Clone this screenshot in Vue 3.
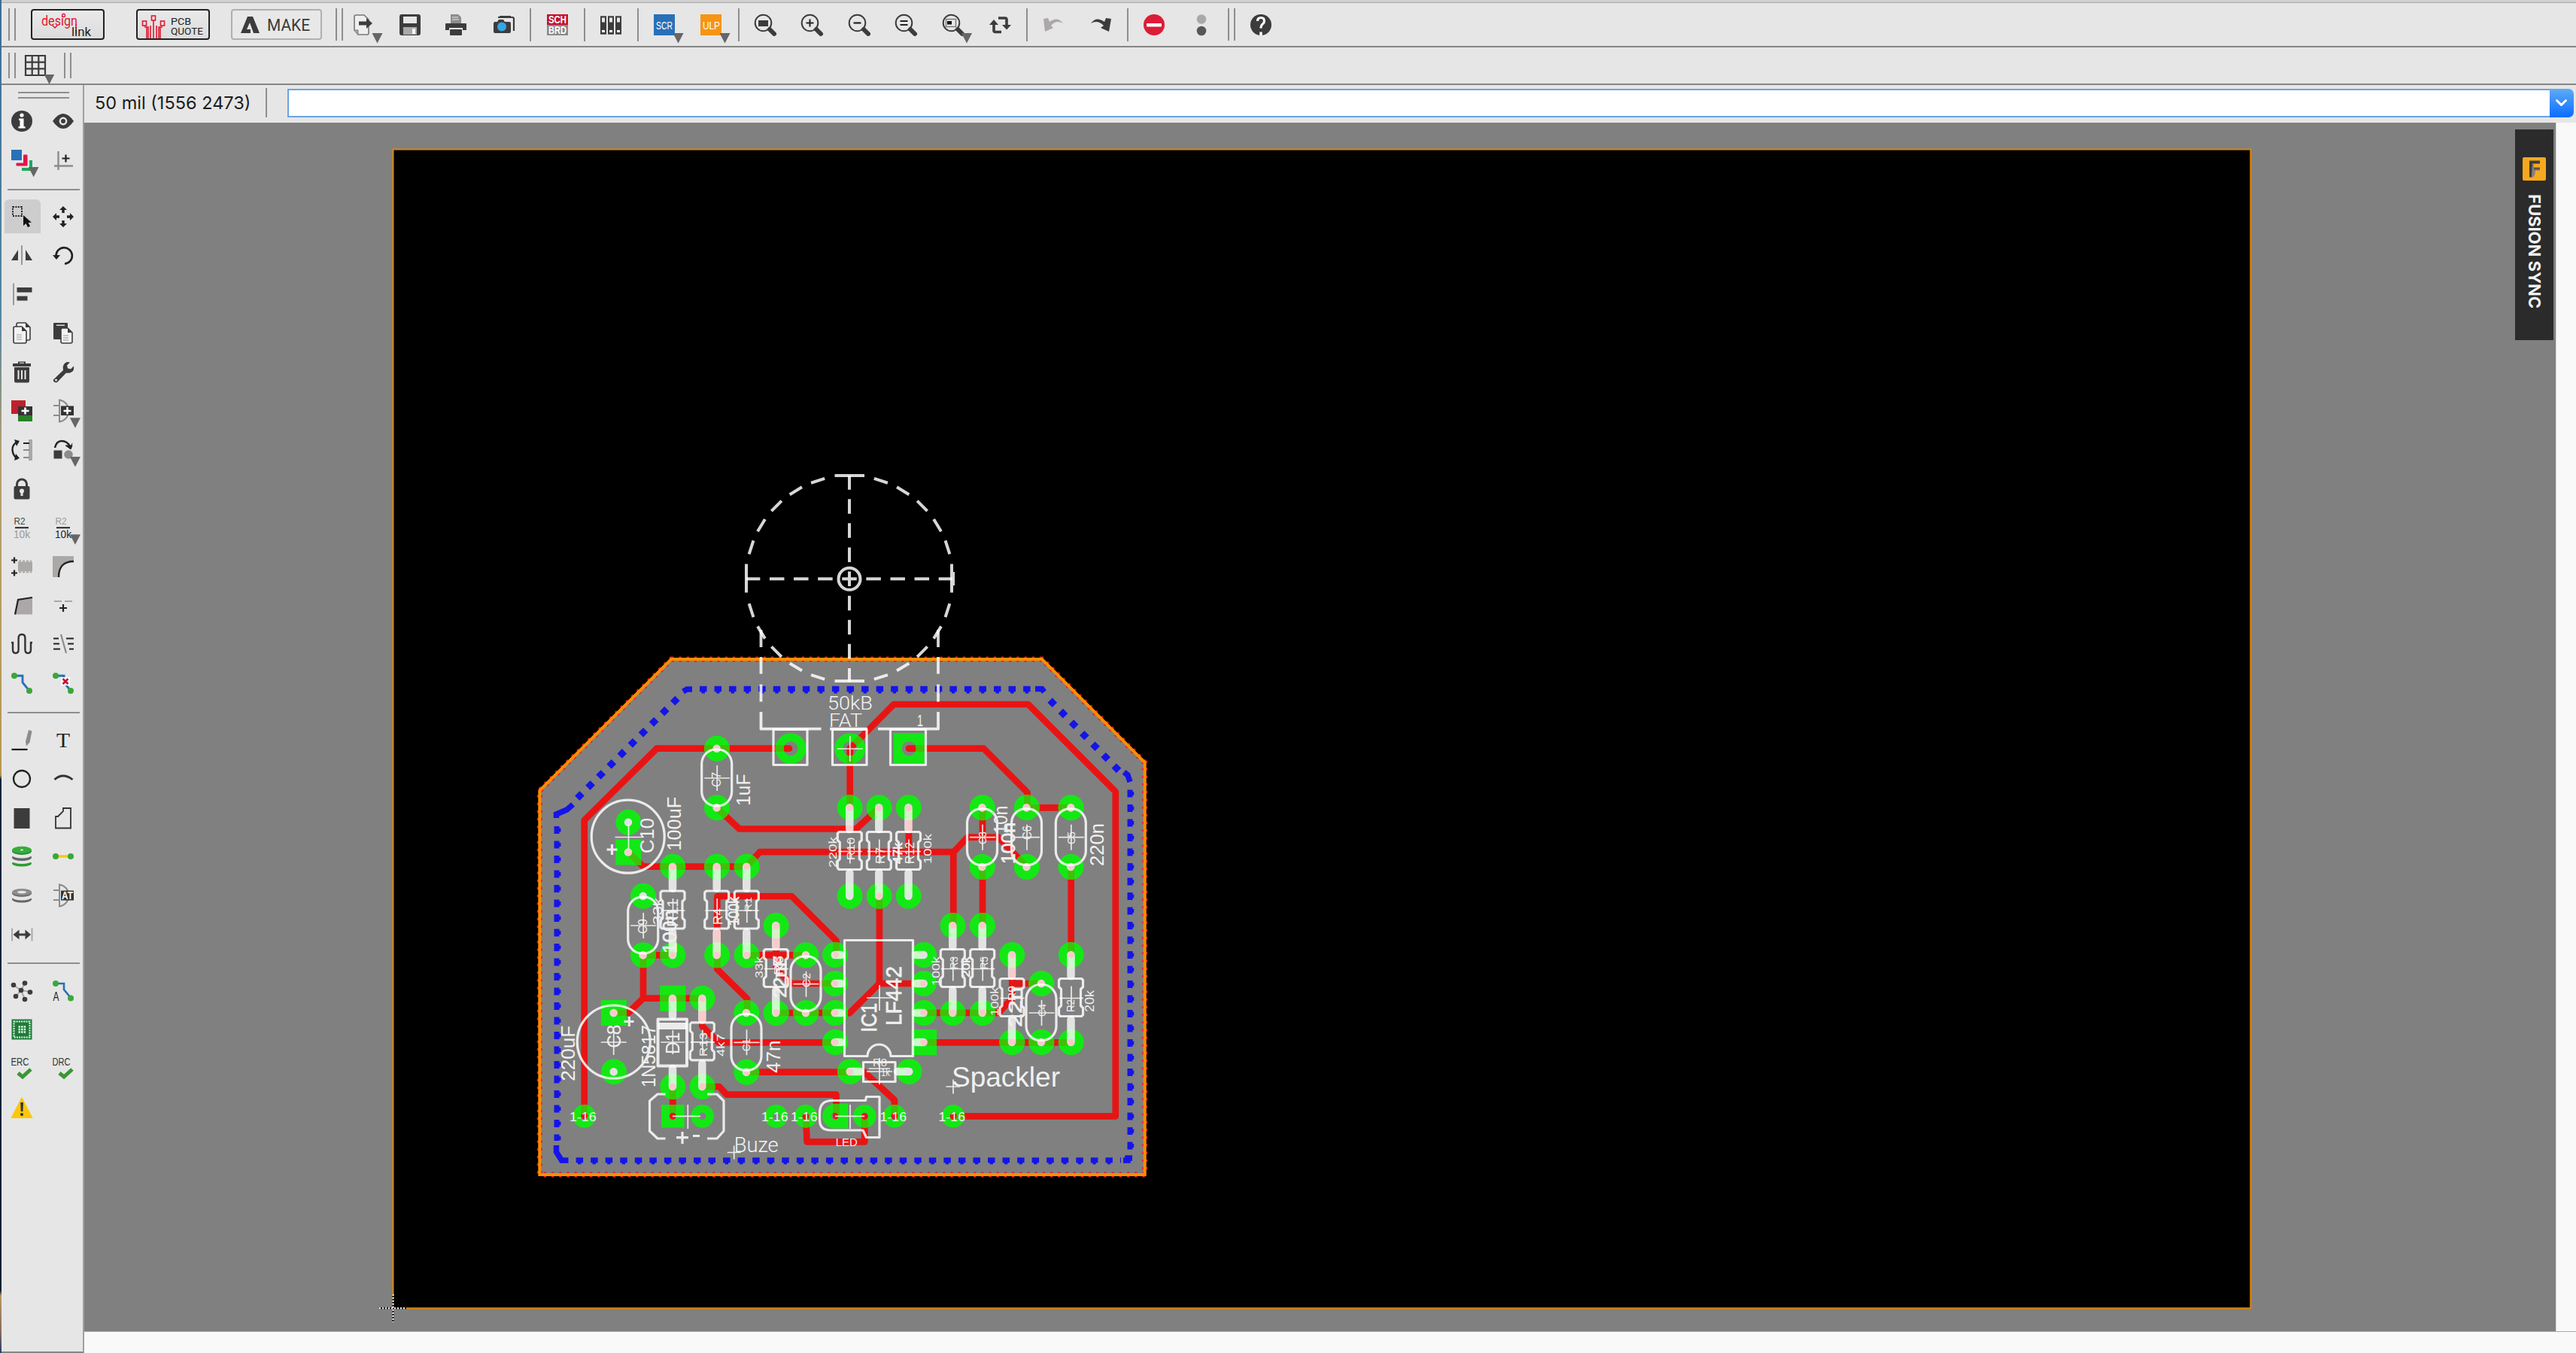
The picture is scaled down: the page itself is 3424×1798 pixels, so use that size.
<script setup>
const D = '#3c3c3c'
const lens = (inner) =>
  `<circle cx="13.5" cy="13.5" r="10.8" fill="none" stroke="${D}" stroke-width="2"/><path d="M22 22l6 6" stroke="${D}" stroke-width="6" stroke-linecap="round"/>${inner}`
const gate = `<path d="M3 9h8M3 22h8" stroke="#8c8c8c" stroke-width="2"/><path d="M11 1.5V30.500Q23 28 23 16T11 1.500z" fill="none" stroke="#8c8c8c" stroke-width="2"/>`
const cad = 'font-family="Liberation Sans, Arial, sans-serif"'
const label = (x, y, s, len, t, fill, extra = '') =>
  `<text x="${x}" y="${y}" font-size="${s}" textLength="${len}" lengthAdjust="spacingAndGlyphs" fill="${fill}" ${cad} ${extra}>${t}</text>`
const tick = `<path d="M11 22l6 5 11-10" fill="none" stroke="#3a9634" stroke-width="5"/>`
const doc = (x, y, w, h) =>
  `<path d="M${x + 2} ${y}h${w - 8}l6 6v${h - 8}q0 2-2 2h-${w - 4}q-2 0-2-2v-${h - 4}q0-2 2-2z" fill="#f2f2f2" stroke="${D}" stroke-width="1.6"/><path d="M${x + w - 6} ${y}v6h6z" fill="${D}"/>`

const icons = {
  exportf: `<path d="M6 3h11l6 6v18q0 2-2 2H9l-5-6V5q0-2 2-2z" fill="#efefef" stroke="#777" stroke-width="1.6"/><path d="M4 23h5v6" fill="#aaa" stroke="#777"/><path d="M10 11.500h10V7l8 7-8 7v-4.500H10z" fill="${D}"/>`,
  save: `<path d="M5 2h22q3 0 3 3v22q0 3-3 3H5q-3 0-3-3V5q0-3 3-3z" fill="${D}"/><rect x="7" y="5" width="18" height="9" fill="#e6e6e6"/><rect x="7" y="19" width="18" height="10" fill="#aca8a8"/><rect x="19" y="21" width="4" height="7" fill="#f5f5f5"/>`,
  print: `<path d="M9 2h10l4 4v9H9z" fill="#8c8c8c"/><path d="M11 6h8M11 9h9" stroke="#e6e6e6" stroke-width="1.200"/><path d="M3 14h26q1 0 1 1v8h-5v-3H7v3H2v-8q0-1 1-1z" fill="${D}"/><rect x="8" y="22" width="16" height="8" rx="1" fill="${D}"/>`,
  camera: `<path d="M8 6h19q2 0 2 2v16M12 10" fill="none" stroke="${D}" stroke-width="2.200"/><path d="M10 6.500l1-1.500h14" stroke="${D}" stroke-width="2" fill="none"/><path d="M4 12h3l2-3h6l2 3h6q2 0 2 2v11q0 2-2 2H4q-2 0-2-2V14q0-2 2-2z" fill="${D}"/><circle cx="13" cy="18.500" r="6" fill="#35a6e6"/>`,
  sch: `<rect x="2" y="2" width="28" height="14" fill="#c4122c"/><rect x="2" y="16" width="28" height="14" fill="#8a8a8a"/>${label(4, 14, 15, 24, 'SCH', '#fff', 'font-weight="bold"')}${label(4, 28, 15, 24, 'BRD', '#fff', 'font-weight="bold"')}`,
  lib: [2, 12, 22].map((x) => `<rect x="${x + 0.7}" y="5" width="6.600" height="23" fill="${D}" stroke="${D}" stroke-width="1.400"/><rect x="${x + 2}" y="6.500" width="4" height="6" fill="#e6e6e6"/><rect x="${x + 2}" y="23" width="4" height="3" fill="#fff"/>`).join(''),
  scr: `<rect x="2" y="2" width="28" height="28" fill="#2870b8"/>${label(5, 21.5, 15, 22, 'SCR', '#fff')}`,
  ulp: `<rect x="2" y="2" width="28" height="28" fill="#f59514"/>${label(5, 21.5, 15, 23, 'ULP', '#fff')}`,
  zfit: lens(`<rect x="7" y="10" width="13" height="8" fill="${D}"/>`),
  zin: lens(`<path d="M13.500 8.500v10M8.500 13.500h10" stroke="#222" stroke-width="2"/>`),
  zout: lens(`<path d="M8.500 13.500h10" stroke="#222" stroke-width="2.200"/>`),
  zeq: lens(`<path d="M8.500 11h10M8.500 16h10" stroke="#222" stroke-width="2"/>`),
  zsel: lens(`<rect x="6.500" y="8.500" width="13" height="10" fill="none" stroke="#777" stroke-width="1.400"/><rect x="8" y="11" width="6" height="4.500" fill="#111"/>`),
  refresh: `<path d="M14 7h9q2 0 2 2v9M18 25.500H10q-2 0-2-2V14" fill="none" stroke="${D}" stroke-width="3.600"/><path d="M19 16h12l-6 6.500zM2 16l6-7 6 7z" fill="${D}"/>`,
  undo: `<path d="M29 14Q22 4 11 12l-2-5-6 1 2 17 11-5-3-3Q20 9 29 14z" fill="#aca8a8"/>`,
  redo: `<path d="M3 14Q10 4 21 12l2-5 7 1-3 17-11-5 4-3Q12 9 3 14z" fill="${D}"/>`,
  stop: `<circle cx="16" cy="16" r="14" fill="#dc1c38"/><rect x="6" y="14" width="20" height="4.600" rx="1" fill="#fff"/>`,
  traffic: `<circle cx="16" cy="8.500" r="6.300" fill="#aca8a8"/><circle cx="16" cy="24" r="6.300" fill="#575757"/>`,
  help: `<circle cx="16" cy="16" r="14" fill="${D}"/><path d="M11.500 11q0-4.500 4.500-4.500t4.500 4.500q0 2.500-2.500 4.300-2 1.600-2 4.200v1" fill="none" stroke="#fff" stroke-width="3.200"/><rect x="14.300" y="25.500" width="3.400" height="4.500" fill="#fff"/>`,
  grid: `<path d="M3 3h26v26H3zM11.700 3v26M20.300 3v26M3 11.700h26M3 20.300h26" fill="none" stroke="${D}" stroke-width="2.200"/>`,
  info: `<circle cx="16" cy="16" r="14" fill="${D}"/><circle cx="16" cy="8" r="2.600" fill="#fff"/><path d="M12 12.500h6.500v10.500h2v2.500h-9V23h2v-8h-1.500z" fill="#fff"/>`,
  eye: `<path d="M2 16Q9 6 16 6t14 10Q23 26 16 26T2 16z" fill="${D}"/><circle cx="16" cy="16" r="4.200" fill="none" stroke="#e6e6e6" stroke-width="2.400"/>`,
  layers: `<rect x="2" y="2" width="14" height="14" fill="#2870b8"/><path d="M18.500 9v11H9v3h14V9z" fill="#e6144c" stroke="#e6144c"/><path d="M28 16v12H16" fill="none" stroke="#22a85a" stroke-width="4"/>`,
  mark: `<path d="M9.500 4v25M4 23.500h25" stroke="#8c8c8c" stroke-width="2.400"/><path d="M19.500 8.500v10M14.500 13.500h10" stroke="#222" stroke-width="2.200"/>`,
  group: `<rect x="4" y="3" width="12" height="12" fill="none" stroke="#222" stroke-width="2" stroke-dasharray="2 1.400"/><path d="M18 14v14l3.500-3 2.500 5 3-1.400-2.500-4.800h4.500z" fill="#111"/>`,
  move: `<path d="M16 2l5 5h-3.300v4h-3.400V7H11zM16 30l5-5h-3.300v-4h-3.400v4H11zM2 16l5-5v3.300h4v3.400H7V21zM30 16l-5-5v3.300h-4v3.400h4V21z" fill="#222"/>`,
  mirror: `<path d="M16 3v26" stroke="#9a9a9a" stroke-width="2"/><path d="M11 9v14H2zM21 9v14h9z" fill="${D}"/>`,
  rotate: `<path d="M6.500 17a10.700 10.700 0 1 1 11.500 10.500" fill="none" stroke="#222" stroke-width="2.600"/><path d="M2 16h10l-5 6z" fill="#222"/>`,
  align: `<path d="M5 1.500v29" stroke="#9a9a9a" stroke-width="2"/><rect x="9.500" y="7" width="20" height="6.500" fill="${D}"/><rect x="9.500" y="18.500" width="14" height="6" fill="${D}"/>`,
  copy: doc(9, 2, 18, 23) + doc(5, 7, 17, 22) + `<path d="M9 18h7M9 21h7M9 24h7" stroke="#999" stroke-width="1.100"/>`,
  paste: `<rect x="3" y="2" width="19" height="22" rx="1" fill="${D}"/><rect x="7" y="4.500" width="11" height="1.500" fill="#ddd"/>${doc(13, 9, 15, 20)}<path d="M16 19h7M16 22h7M16 25h7" stroke="#999" stroke-width="1"/>`,
  trash: `<path d="M4 4h7V1.500h10V4h7v4H4zM6 9h20v18q0 2.500-2 2.500H8q-2 0-2-2.500z" fill="${D}"/><path d="M11.500 13v12M16 13v12M20.500 13v12" stroke="#e6e6e6" stroke-width="2"/><path d="M13 3.300h6" stroke="#e6e6e6"/>`,
  wrench: `<path d="M3.500 25L16 13q-2-8 5-11l4 .5-4 4 1 4 4 1 4-4q1 6-3 8-3 2-7 1L8 29q-3 1-4.500-1t0-3z" fill="${D}"/><circle cx="6.500" cy="26" r="1.500" fill="#e6e6e6"/>`,
  addpart: `<rect x="2" y="2" width="19" height="18" fill="#c0202c"/><rect x="11" y="20" width="19" height="10" fill="#2a8028"/><rect x="11" y="10" width="19" height="12" fill="#333"/><path d="M20.500 11.500v9M15.500 16h10" stroke="#fff" stroke-width="2.600"/>`,
  addgate: gate + `<rect x="13" y="9.500" width="17" height="12.500" fill="#333"/><path d="M21.500 11v9.500M16.500 16h10" stroke="#fff" stroke-width="2.400"/>`,
  pinswap: `<path d="M10 5Q3 9 3.500 16T10 28" fill="none" stroke="#222" stroke-width="2.400"/><path d="M6 2l7 2-4 7zM6 30l7-3-5-6z" fill="#222"/><rect x="25" y="2" width="5" height="28" fill="#aca8a8"/><path d="M18 7h8" stroke="#222" stroke-width="2"/><path d="M18 16h8M18 26h8" stroke="#8c8c8c" stroke-width="2"/>`,
  replace: `<path d="M5 13Q7 4 14 4t11 7" fill="none" stroke="#222" stroke-width="2.600"/><path d="M19 10h9l-2 5zM28 7l-2 7" fill="#222" stroke="#222"/><rect x="3.500" y="16.500" width="11" height="11" fill="${D}"/><circle cx="23" cy="22" r="5.800" fill="#8c8c8c"/>`,
  lock: `<path d="M9.500 14V9.500a6.500 6.500 0 0 1 13 0V14" fill="none" stroke="${D}" stroke-width="3"/><rect x="5.500" y="12" width="21" height="17.500" rx="2" fill="${D}"/><circle cx="16" cy="18.500" r="3" fill="#e6e6e6"/><path d="M16 18v7" stroke="#e6e6e6" stroke-width="3"/>`,
  name: label(5.500, 12, 13, 15, 'R2', '#444') + `<path d="M7 16.300h18" stroke="#111" stroke-width="1.800"/>` + label(5, 30, 14, 22, '10k', '#9a9a9a'),
  value: label(5.500, 12, 13, 15, 'R2', '#9a9a9a') + `<path d="M7 16.300h18" stroke="#111" stroke-width="1.800"/>` + label(5, 30, 14, 22, '10k', '#222'),
  smash: `<rect x="11" y="9.500" width="19" height="13" fill="#aca8a8"/><path d="M12 8.500h17M12 23.500h17" stroke="#aca8a8" stroke-width="2" stroke-dasharray="3 2"/><path d="M6 3.500v8M2 7.500h8M6 20.500v8M2 24.500h8" stroke="#222" stroke-width="2.200"/>`,
  miter: `<rect x="2" y="2" width="28" height="28" fill="#aca8a8"/><path d="M10 30Q10 9 30 9v21z" fill="#e6e6e6"/><path d="M10 30Q10 9 30 9" fill="none" stroke="#222" stroke-width="2.400"/>`,
  split: `<path d="M7 27.500L11 8l19-3v22.500z" fill="#aca8a8"/><path d="M7 27.500L11 8l19-3" fill="none" stroke="#222" stroke-width="2.200"/>`,
  optimize: `<path d="M4 10h10M18 10h10" stroke="#aca8a8" stroke-width="2.200"/><path d="M16 14v10M11 19h10" stroke="#222" stroke-width="2.200"/>`,
  meander: `<path d="M2 14h2v9q0 5 3.800 5t3.800-5V8q0-5 4.400-5t4.400 5v15q0 5 3.800 5t3.800-5v-9h2" fill="none" stroke="#333" stroke-width="2.400"/>`,
  ripup: `<path d="M13 3l7 25" stroke="#8c8c8c" stroke-width="2.200"/><path d="M3 8.500h7M3 15.500h8M3 22.500h9M20 8.500h10M22 15.500h8M24 22.500h6" stroke="#222" stroke-width="2"/>`,
  route: `<path d="M6 6h11v9l9 11" fill="none" stroke="#2870b8" stroke-width="2.800"/><circle cx="6" cy="6" r="4" fill="#3aa838"/><circle cx="26" cy="26" r="4" fill="#3aa838"/>`,
  unroute: `<path d="M6 6h11v9l9 11" fill="none" stroke="#2870b8" stroke-width="2.800"/><rect x="13" y="8" width="12" height="11" fill="#fff"/><path d="M15.500 10l7 7M22.500 10l-7 7" stroke="#c8102c" stroke-width="2.600"/><circle cx="6" cy="6" r="4" fill="#3aa838"/><circle cx="26" cy="26" r="4" fill="#3aa838"/>`,
  line: `<path d="M2.500 29h21" stroke="#111" stroke-width="2.200"/><path d="M25 3l4.500 1.500-3 15-4.500 5-1-6z" fill="#8c8c8c"/>`,
  text: `<text x="7" y="26" font-size="27" textLength="18" lengthAdjust="spacingAndGlyphs" fill="#222" font-family="Liberation Serif, serif">T</text>`,
  circle: `<circle cx="16" cy="16" r="11" fill="none" stroke="#222" stroke-width="2.300"/>`,
  arc: `<path d="M4.500 17q11-10 24 0" fill="none" stroke="#333" stroke-width="2.800"/>`,
  rect: `<rect x="5.500" y="3" width="21" height="27" fill="${D}"/>`,
  poly: `<path d="M6 29.500V14h3l7-7V3h10v26.500z" fill="none" stroke="#333" stroke-width="1.800"/>`,
  via: `<ellipse cx="16" cy="25.500" rx="13" ry="4" fill="#2f9c34"/><ellipse cx="16" cy="22" rx="13" ry="4" fill="#e6e6e6"/><ellipse cx="16" cy="17.500" rx="13" ry="4.500" fill="#666"/><ellipse cx="16" cy="14" rx="13" ry="4.500" fill="#e6e6e6"/><ellipse cx="16" cy="9" rx="13" ry="5" fill="#1e8c36"/><ellipse cx="16" cy="7.500" rx="13" ry="4.700" fill="#38ac3a"/><ellipse cx="16" cy="7.500" rx="2" ry=".9" fill="#e6e6e6"/>`,
  signal: `<path d="M6 16h20" stroke="#ffc814" stroke-width="3.600"/><circle cx="6" cy="16" r="4" fill="#3aa838"/><circle cx="26" cy="16" r="4" fill="#3aa838"/>`,
  hole: `<ellipse cx="16" cy="21" rx="13" ry="4.500" fill="#666"/><ellipse cx="16" cy="18" rx="13" ry="4.500" fill="#e6e6e6"/><ellipse cx="16" cy="13" rx="13" ry="4.800" fill="#666"/><ellipse cx="16" cy="11.500" rx="13" ry="4.500" fill="#8c8c8c"/><ellipse cx="16" cy="11.500" rx="6" ry="1.800" fill="#e6e6e6"/>`,
  attr: gate + `<rect x="13" y="9.500" width="17" height="13" fill="#333"/>${label(14, 21, 14, 15, 'AT', '#fff', 'font-weight="bold"')}`,
  dim: `<path d="M3 7.500v17M29.500 7.500v17" stroke="#aca8a8" stroke-width="2"/><path d="M4.500 16l8-6.500v5h8v-5l7.500 6.500-7.500 6.500v-5h-8v5z" fill="${D}"/>`,
  ratsnest: `<path d="M15 15L5 8M15 15l5-9M15 15l12 2M15 15l5 12M15 15l-7 8" stroke="#aca8a8" stroke-width="2"/>` + [[15, 15], [5, 8], [20, 5.500], [27, 17.500], [20, 27], [8, 23]].map(([x, y]) => `<circle cx="${x}" cy="${y}" r="3.300" fill="${D}"/>`).join(''),
  autoroute: `<path d="M6 6h11v8l9 11" fill="none" stroke="#2870b8" stroke-width="2.600"/><circle cx="6" cy="6" r="4" fill="#3aa838"/><circle cx="26" cy="25.500" r="4" fill="#3aa838"/>${label(2.500, 29, 17, 8, 'A', '#222')}`,
  cam: `<rect x="2.500" y="2.500" width="27" height="27" fill="#1e7c3a"/><rect x="5.500" y="5.500" width="21" height="21" fill="none" stroke="#e8f4e8" stroke-width="2" stroke-dasharray="2 1.200"/><path d="M11.500 12.500h10M11.500 16h10M11.500 19.500h10" stroke="#e8f4e8" stroke-width="2.400" stroke-dasharray="2.400 1.200"/>`,
  erc: label(1.500, 12, 15, 24, 'ERC', '#333') + tick,
  drc: label(1.500, 12, 15, 24, 'DRC', '#333') + tick,
  warn: `<path d="M16 2.500L30 29.500H2z" fill="#fcc80c" stroke="#fcc80c" stroke-linejoin="round"/><path d="M14.200 9h3.800l-.6 12h-2.600z" fill="#333"/><circle cx="16" cy="25" r="2.100" fill="#333"/>`,
}

const topTools = [
  ['exportf', 60, 1], ['save', 63], ['print', 60], ['camera', 67], ['|', 4], ['sch', 68], ['|', 4], ['lib', 65],
  ['|', 8], ['scr', 62, 1], ['ulp', 62, 1], ['|', 12], ['zfit', 58], ['zin', 66], ['zout', 59], ['zeq', 66],
  ['zsel', 59, 1], ['refresh', 66], ['|', 6], ['undo', 64], ['redo', 62], ['|', 10], ['stop', 59],
  ['traffic', 67], ['||', 14], ['help', 64],
].map(([name, width, menu]) => ({ name, width, menu }))

const sideRows = [
  ['info', 'eye'], ['layers+', 'mark'], [],
  ['group', 'move'], ['mirror', 'rotate'], ['align', ''], ['copy', 'paste'], ['trash', 'wrench'],
  ['addpart', 'addgate+'], ['pinswap', 'replace+'], ['lock', ''], ['name', 'value+'], ['smash', 'miter'],
  ['split', 'optimize'], ['meander', 'ripup'], ['route', 'unroute'], [],
  ['line', 'text'], ['circle', 'arc'], ['rect', 'poly'], ['via', 'signal'], ['hole', 'attr'], ['dim', ''], [],
  ['ratsnest', 'autoroute'], ['cam', ''], ['erc', 'drc'], ['warn', ''],
].map((r) => r.map((k) => ({ name: k.replace('+', ''), menu: k.endsWith('+') })))

/* board */
const edge = 'M892.3 876H1385L1521.7 1013.300V1561H717.300V1050.700z'

const traces = [
  'M1049 994.700H873L776.700 1090V1483',
  'M1129.700 994.700L1188 936H1366.700L1482.800 1052V1483.300H1267',
  'M1208 994.700H1307.500L1365.500 1053V1073.300H1423.600',
  'M1129.700 994.700V1073.300',
  'M952.700 1073.300L982.700 1101.500H1138L1168.700 1073.300',
  'M835 1132.500L855 1151.700H992.300L1010 1132.200H1267.500L1286 1112.700H1327L1365 1152',
  'M1267.300 1132V1230', 'M1306 1073.300V1112', 'M1306 1152V1230', 'M1208 1073.300V1132', 'M1423.700 1152V1269',
  'M993 1346V1327L953.300 1288V1191H1052.300L1111.500 1250V1269',
  'M1168.900 1190.700V1307H1227', 'M1168.900 1307L1129 1346.500', 'M1031.700 1346H1110',
  'M855 1269.300H894', 'M855 1269.300V1326.700L835 1346H815.700', 'M855 1326.700H933.300',
  'M933.300 1326.700V1363.500L955 1385.300H1110', 'M992.300 1424.700H1129.700', 'M1148 1424L1189 1462V1483.300',
  'M933.300 1444H956L966 1454.700H1111.500V1483', 'M894.300 1444V1483.300',
  'M1071 1483.300L1072.700 1517.300H1149.300V1483.300',
  'M992.300 1269.300H1071', 'M1031.700 1230V1288L1052 1307H1109.700',
  'M1227 1346H1327L1345.300 1327V1269', 'M1345.300 1307H1384.700', 'M1227 1385.300H1423.700',
]

const resistors = [
  [894, 1151.700, 1269.300], [952.700, 1151.700, 1269.300], [992.300, 1151.700, 1269.300],
  [1129.300, 1073.300, 1190.700], [1168.300, 1073.300, 1190.700], [1207.500, 1073.300, 1190.700],
  [1031.300, 1230, 1346], [1266.300, 1230, 1346], [1305.700, 1230, 1346],
  [1345, 1269, 1385], [1423.500, 1269, 1385], [933.300, 1326.700, 1444],
]
const caps = [
  [952.700, 994.700, 1073.300], [854.700, 1190.700, 1269.300], [1071, 1269.300, 1346], [992, 1346, 1424.700],
  [1305.500, 1073.300, 1152], [1364.500, 1073.300, 1152], [1423.300, 1073.300, 1152], [1384, 1307, 1385],
]
const rounds = [
  ...resistors.flatMap(([x, a, b]) => [[x, a], [x, b]]),
  ...caps.flatMap(([x, a, b]) => [[x, a], [x, b]]),
  [835, 1092.700], [815.700, 1424.300], [894, 1444], [1109.700, 1269], [1109.700, 1307], [1109.700, 1346],
  [1109.700, 1385], [1227.700, 1269], [1227.700, 1307], [1227.700, 1346], [1129.700, 1424], [1208.300, 1424],
].map(([x, y]) => [x + 0.3, y, 17, 5])
const smalls = [[776.700, 1483.300], [1031.700, 1483.300], [1071, 1483.300], [1189, 1483.300], [1267, 1483.300], [933.700, 1483.300], [1149.300, 1483.300]]
  .map(([x, y]) => [x, y, 15.300, 4.800])
const rings = [...rounds, ...smalls, [1051, 994.700, 20.500, 9.500], [1129.800, 994.700, 20.500, 9.500]]
const squares = [[835.300, 1132.500, 17, 5], [815.800, 1346, 17, 5], [894.300, 1326.700, 17, 5], [1228, 1385, 17, 5],
  [894.300, 1483.300, 15.300, 4.800], [1208.300, 994.700, 20.500, 9.500]]

const sq = ([x, y, h, r]) =>
  `M${x - h} ${y - h}h${2 * h}v${2 * h}h${-2 * h}zM${x - r} ${y}a${r} ${r} 0 1 0 ${2 * r} 0a${r} ${r} 0 1 0 ${-2 * r} 0z`
const ring = ([x, y, R, r]) =>
  `M${x - R} ${y}a${R} ${R} 0 1 0 ${2 * R} 0a${R} ${R} 0 1 0 ${-2 * R} 0zM${x - r} ${y}a${r} ${r} 0 1 0 ${2 * r} 0a${r} ${r} 0 1 0 ${-2 * r} 0z`
const ledPad = `M1109.500 1467H1127.300V1499.500H1109.500a16.200 16.200 0 0 1 0 -32.500zM1105 1483.300a4.800 4.800 0 1 0 9.600 0a4.800 4.800 0 1 0 -9.600 0z`
const padPaths = [...rings.map(ring), ...squares.map(sq), ledPad]

const body = ([x, a, b]) => {
  const c = (a + b) / 2 - 1.5
  return `M${x - 14} ${c - 25}h28l2 2v9l-3 3v22l3 3v9l-2 2h-28l-2-2v-9l3-3v-22l-3-3v-9z`
}
const cross = (x, y, h = 16) => `M${x - h} ${y}h${2 * h}M${x} ${y - h}v${2 * h}`
const crosses = [
  ...resistors.map(([x, a, b]) => cross(x + 0.5, (a + b) / 2 - 0.5)),
  ...caps.map(([x, a, b]) => cross(x + 0.5, (a + b) / 2, 17)),
  cross(815.700, 1385, 17), cross(894.300, 1385, 16), cross(1129.800, 995, 17), cross(1169, 1326, 17),
  cross(1169, 1424, 17), cross(1169, 1420, 14), cross(975.700, 1531.500, 9), cross(1267, 1444, 9.500),
  'M817.500 1112.500h37M835.500 1096v32', 'M894 1483.300h37M914.300 1468v32', 'M1110 1483.300h39M1130 1468v32',
].join('')

const rad = Math.PI / 180
const dial = []
for (let q = 0; q < 4; q++)
  for (const a of [17.800, 31.300, 45, 58.700, 72.200]) {
    const t = (q * 90 + a) * rad
    const x = 1129 + 137 * Math.sin(t)
    const y = 769.300 - 137 * Math.cos(t)
    const dx = 9.500 * Math.cos(t)
    const dy = 9.500 * Math.sin(t)
    dial.push(`M${x - dx} ${y - dy}L${x + dx} ${y + dy}`)
  }
const dialPath = dial.join('')

/* upright text reading bottom-to-top: baseline x, bottom y, length, cap height, text, weight */
const vLabels = [
  [997, 1070.700, 42, 19, '1uF', 1], [905, 1130.700, 72, 18, '100uF', 1], [869, 1134, 47, 19, 'C10', 1],
  [899, 1267, 58, 18, '100n', 2], [880, 1229, 36, 12, '33k', 1], [901, 1232, 38, 15, 'R11', 1],
  [960, 1229, 22, 12, 'R4', 1], [982, 1230, 38, 14, '100k', 2], [999, 1212, 20, 9, 'R1', 1],
  [860, 1241, 20, 12, 'C9', 1], [957.500, 1046, 20, 12, 'C7', 1], [1014, 1300, 29, 11, '33k', 1],
  [1045, 1326, 56, 17, '22nF', 2], [1041, 1296, 26, 12, 'R6', 1], [1077, 1312, 19, 11, 'C2', 1],
  [764, 1436.700, 74, 18, '220uF', 1], [825, 1392.700, 31, 19, 'C8', 1], [870.500, 1445, 83, 19, '1N5817', 1],
  [902.500, 1400.700, 29, 18, 'D1', 1], [940, 1404, 32, 11, 'R13', 1], [963, 1404, 30, 11, '4k7', 1],
  [997, 1397, 17, 11, 'C1', 1], [1036.500, 1425.700, 43, 19, '47n', 1],
  [1165, 1371.700, 39, 21, 'IC1', 2], [1198, 1363, 79, 21, 'LF442', 2],
  [1467, 1151, 57, 18, '220n', 1], [1339, 1108, 37, 18, '10n', 1], [1349, 1148, 55, 18, '100n', 2],
  [1112, 1153, 41, 11, '220k', 1], [1136, 1143, 30, 11, 'R10', 1], [1175.500, 1148, 22, 12, 'R7', 1],
  [1199, 1148, 28, 12, '47k', 2], [1215, 1148, 29, 12, 'R12', 1], [1237.500, 1148, 40, 11, '100k', 1],
  [1310.500, 1122, 17, 11, 'C3', 1], [1371, 1116, 19, 12, 'C6', 1], [1428.500, 1122, 17, 11, 'C5', 1],
  [1249, 1310, 39, 11, '100k', 1], [1273, 1288, 17, 11, 'R3', 1], [1289, 1299, 28, 11, '20k', 2],
  [1312.500, 1288, 17, 11, 'R5', 1], [1327, 1350, 38, 11, '100k', 1], [1358, 1365, 54, 17, '22n', 2],
  [1350, 1330, 20, 11, 'R9', 1], [1390, 1351, 17, 11, 'C4', 1], [1428, 1345, 17, 11, 'R2', 1],
  [1454, 1345, 29, 12, '20k', 1],
]
/* x, baseline y, length, cap height, text, weight */
const hLabels = [
  [1100, 943, 60, 18.500, '50kB', 0], [1102, 966, 44, 18.500, 'FAT', 0], [1219, 965, 8, 15.500, '1', 1],
  [975.700, 1531, 59, 19.500, 'Buze', 0], [1110.700, 1523, 29, 11, 'LED', 1], [1265, 1443.500, 144, 26, 'Spackler', 1],
  [1160, 1417, 19, 11, 'R8', 1], [1171, 1430, 12, 11, '1k', 1],
  ...[757, 1012, 1051, 1169.500, 1247.500].map((x) => [x, 1489.500, 35.500, 11.500, '1-16', 1]),
]
</script>

<template>
  <div class="app">
    <div class="desktop"></div>
    <div class="window">
      <div class="strip"></div>
      <header class="bar main">
        <i class="grip"></i>
        <button class="badge link">
          <svg width="94" height="38" viewBox="0 0 94 38">
            <text x="12" y="20" font-size="18" textLength="48" lengthAdjust="spacingAndGlyphs" fill="#e01830">design</text>
            <circle cx="41.500" cy="6.500" r="2" fill="none" stroke="#e01830" stroke-width="1.300" />
            <path d="M27 20l3 3 3-3M58 18v13" fill="none" stroke="#e01830" stroke-width="1.500" />
            <text x="52" y="34" font-size="17" textLength="26" lengthAdjust="spacingAndGlyphs" fill="#222">link</text>
          </svg>
        </button>
        <button class="badge quote">
          <svg width="94" height="38" viewBox="0 0 94 38">
            <path d="M12 38V22h-3M17 38V20M21 38V13M25 38V20M30 38V22h3M9 21v-1M9 22h5v16M33 22h-5v16" fill="none" stroke="#e01830" stroke-width="1.600" />
            <rect x="6.500" y="14" width="5" height="6" fill="none" stroke="#e01830" stroke-width="1.600" />
            <rect x="18.500" y="7" width="5" height="6" fill="none" stroke="#e01830" stroke-width="1.600" />
            <rect x="30.500" y="14" width="5" height="6" fill="none" stroke="#e01830" stroke-width="1.600" />
            <text x="44" y="19" font-size="12" textLength="27" lengthAdjust="spacingAndGlyphs" fill="#222">PCB</text>
            <text x="44" y="32" font-size="12" textLength="43" lengthAdjust="spacingAndGlyphs" fill="#222">QUOTE</text>
          </svg>
        </button>
        <button class="badge make">
          <svg width="117" height="38" viewBox="0 0 117 38">
            <path d="M11 30L20 8h7l9 22h-8l-5-14-4 9h5v5z" fill="#3c3c3c" />
            <text x="46" y="27" font-size="22" textLength="57" lengthAdjust="spacingAndGlyphs" fill="#3a3a3a">MAKE</text>
          </svg>
        </button>
        <i class="grip second"></i>
        <div class="tools">
          <div v-for="(t, i) in topTools" :key="i" class="tool" :style="{ width: t.width + 'px' }">
            <i v-if="t.name === '|'" class="sep"></i>
            <i v-else-if="t.name === '||'" class="grip"></i>
            <template v-else>
              <svg class="icon" viewBox="0 0 32 32" v-html="icons[t.name]"></svg>
              <i v-if="t.menu" class="more"></i>
            </template>
          </div>
        </div>
      </header>

      <div class="bar params">
        <i class="grip"></i>
        <div class="tool gridtool">
          <svg class="icon" viewBox="0 0 32 32" v-html="icons.grid"></svg>
          <i class="more"></i>
        </div>
        <i class="grip"></i>
      </div>

      <div class="work">
        <aside class="side">
          <div class="handle"></div>
          <template v-for="(row, i) in sideRows" :key="i">
            <div v-if="!row.length" class="rule"></div>
            <div v-else class="row">
              <div v-for="(c, j) in row" :key="j" class="cell" :class="{ on: c.name === 'group' }">
                <svg v-if="c.name" class="icon" viewBox="0 0 32 32" v-html="icons[c.name]"></svg>
                <i v-if="c.menu" class="more"></i>
              </div>
            </div>
          </template>
        </aside>

        <main class="editor">
          <div class="command">
            <span class="coords">50 mil (1556 2473)</span>
            <i class="csep"></i>
            <div class="field">
              <div class="input"></div>
              <div class="drop">
                <svg width="32" height="36" viewBox="0 0 32 36"><path d="M9.500 15.500l6 6 6-6" fill="none" stroke="#fff" stroke-width="3" stroke-linecap="round" stroke-linejoin="round" /></svg>
              </div>
            </div>
          </div>

          <div class="viewport">
            <div class="canvas">
              <svg class="board" width="3285" height="1606" viewBox="112 163 3285 1606">
                <defs>
                  <mask id="padmask" maskUnits="userSpaceOnUse" x="700" y="860" width="840" height="720">
                    <path v-for="(p, i) in padPaths" :key="i" :d="p" fill="#fff" fill-rule="evenodd" />
                  </mask>
                </defs>
                <rect x="522.500" y="198.500" width="2469" height="1540" fill="#000" stroke="#e08600" stroke-width="2" />
                <path d="M504 1738.500h36M522.500 1720v37" stroke="#000" stroke-width="2" />
                <path d="M504 1738.500h36M522.500 1720v37" stroke="#fff" stroke-width="2" stroke-dasharray="2 2" />

                <path :d="edge" fill="#808080" />
                <path :d="edge" fill="none" stroke="#f01818" stroke-width="7" stroke-dasharray="3.300 6.900" />
                <path :d="edge" fill="none" stroke="#ff8c00" stroke-width="4" />

                <g fill="none" stroke="#1414e8">
                  <path d="M930 915.500H1372" stroke-width="7.500" stroke-dasharray="9.500 10.050" />
                  <path d="M932.500 920.300H1372" stroke-width="2.500" stroke-dasharray="4.500 15.050" />
                  <path d="M765.600 1541.700H1490" stroke-width="7" stroke-dasharray="9.500 10.050" />
                  <path d="M768 1546H1490" stroke-width="2.500" stroke-dasharray="4.500 15.050" />
                  <path d="M740 1098V1516" stroke-width="7" stroke-dasharray="10 9.500" />
                  <path d="M744.200 1100.500V1516" stroke-width="2.500" stroke-dasharray="5 14.500" />
                  <path d="M1502 1049.500V1532" stroke-width="7" stroke-dasharray="10 9.500" />
                  <path d="M1506 1052V1532" stroke-width="2.500" stroke-dasharray="5 14.500" />
                  <path d="M900.500 928L764 1064" stroke-width="9" stroke-dasharray="9 10.900" />
                  <path d="M1395.600 930.500L1492 1029" stroke-width="9" stroke-dasharray="9 11.300" />
                  <path d="M908 919l5-3h7M739.500 1087v-5l14-6 8-7M739.500 1522v9l7 11h9M1376 915.500h9l3 4M1494 1026l5 4 3 9M1493 1542h6v-3h6" stroke-width="7.500" />
                </g>

                <g fill="none" stroke="#e81414" stroke-width="8.700" stroke-linejoin="round">
                  <path v-for="(t, i) in traces" :key="i" :d="t" stroke-linecap="round" />
                </g>
                <path v-for="(p, i) in padPaths" :key="'p' + i" :d="p" fill="#14e814" fill-rule="evenodd" />
                <g fill="none" stroke="#40c008" stroke-width="8.700" stroke-linejoin="round" mask="url(#padmask)">
                  <path v-for="(t, i) in traces" :key="i" :d="t" stroke-linecap="round" />
                </g>

                <g class="leads">
                  <template v-for="(r, i) in resistors" :key="i">
                    <path :d="`M${r[0]} ${r[1]}V${(r[1] + r[2]) / 2 - 30}`" />
                    <path :d="`M${r[0]} ${r[2]}V${(r[1] + r[2]) / 2 + 28}`" />
                  </template>
                  <path d="M894 1326.700V1350M894 1444V1420" />
                  <path v-for="y in [1269, 1307, 1346, 1385]" :key="y" :d="`M1109.700 ${y}H1118M1227.700 ${y}H1218`" />
                  <path d="M1129.700 1424H1143M1208.300 1424H1193" />
                  <path v-for="(c, i) in caps" :key="'c' + i" :d="`M${c[0]} ${c[1]}v.1M${c[0]} ${c[2]}v.1`" />
                  <path d="M835 1092.700v.1M835 1132.500v.1M815.700 1346v.1M815.700 1424.300v.1" />
                </g>

                <g class="silk">
                  <path v-for="(r, i) in resistors" :key="i" :d="body(r)" />
                  <rect v-for="(c, i) in caps" :key="'c' + i" :x="c[0] - 20" :y="c[1] + 1.500" width="40" :height="c[2] - c[1] - 4" rx="18" ry="19" />
                  <circle cx="834.700" cy="1111.700" r="48.500" />
                  <circle cx="815.700" cy="1384.500" r="48.500" />
                  <path d="M1122.500 1249.500H1213.500V1403.500H1184A15 15 0 1 0 1153 1403.500H1122.500z" />
                  <path d="M1147.500 1411.500H1190V1437.500H1147.500z" />
                  <path d="M1150.500 1462.500H1106Q1089.500 1462.500 1089.500 1479V1488Q1089.500 1502 1104 1502H1147L1151.500 1511.500H1169V1457.500H1151.500z" />
                  <path d="M884.500 1454H874L863.500 1463V1503L874 1513H884.500M940 1454H953L962 1463V1503L953 1513H940" />
                  <path d="M874.500 1354.500H913V1416.500H874.500z" stroke-width="4" />
                  <path d="M875 1363.500H913" stroke-width="9" />
                  <path d="M899 1511.700h16M907 1504v16M921 1509.500h9M806.500 1129h14M813.500 1122v14M829.500 1357.500h13M836.300 1351v13" />
                  <path d="M1028 969.500H1073V1016.500H1028zM1106.500 969.500H1152V1016.500H1106.500zM1183.500 969.500H1230.500V1016.500H1183.500z" />
                  <path d="M1011.500 837v23M1011.500 873v22.500M1011.500 909.500v23M1011.500 946v22.700H1091.500M1103 968.700h50M1167 968.700h80V946M1247 932.500v-23M1247 895.500V873M1247 860V837" stroke-width="3.800" />
                  <path :d="dialPath" stroke-width="4" />
                  <path d="M1109.500 632h39.500M1109.500 905h39.500M992 749.500v38M1265 749.500v38M1267 760v18" stroke-width="4" />
                  <path d="M1129 632.300V906M992 769.300H1266" stroke-width="4" stroke-dasharray="19.500 12.600" stroke-dashoffset="1.150" />
                  <circle cx="1129" cy="769.300" r="14.500" stroke-width="4" />
                  <path :d="crosses" stroke-width="1.700" />
                </g>

                <g class="legend">
                  <text
                    v-for="(l, i) in vLabels" :key="i" :class="'w' + l[5]"
                    :transform="`translate(${l[0]} ${l[1]}) rotate(-90)`" :font-size="l[3] / 0.72"
                    :textLength="l[2]" lengthAdjust="spacingAndGlyphs"
                  >{{ l[4] }}</text>
                  <text
                    v-for="(l, i) in hLabels" :key="'h' + i" :class="'w' + l[5]" :x="l[0]" :y="l[1]"
                    :font-size="l[3] / 0.72" :textLength="l[2]" lengthAdjust="spacingAndGlyphs"
                  >{{ l[4] }}</text>
                </g>
              </svg>
              <div class="fusion">
                <svg width="31" height="31" viewBox="0 0 31 31">
                  <rect width="31" height="31" rx="2" fill="#f8a820" />
                  <path d="M9 4.500h14v4H13v18H9z" fill="#3c3c3c" /><path d="M13 9l2-1v6h8v3.500h-6q0 6-3 9h-2z" fill="#8a8078" />
                  <path d="M15 13.500h8v3h-8z" fill="#554" />
                </svg>
                <span>FUSION SYNC</span>
              </div>
            </div>
            <div class="vscroll"></div>
          </div>
          <div class="hscroll"></div>
        </main>
      </div>
    </div>
  </div>
</template>

<style>
body { margin: 0; background: #e6e6e6; overflow: hidden; }
</style>

<style scoped>
.app { display: flex; width: 3424px; height: 1798px; background: #e6e6e6; font-family: Inter, "Liberation Sans", sans-serif; overflow: hidden; }
.desktop { width: 2px; background: linear-gradient(#3d6f94 0, #5686a4 420px, #b4a070 600px, #b89850 1030px, #0c2440 1036px, #102038 1715px, #b89a60 1722px, #8a6a60 1770px, #28406c 1798px); }
.window { flex: 1; display: flex; flex-direction: column; min-width: 0; }
.strip { height: 3px; background: #d0d0d0; border-bottom: 1px solid #a8a8a8; }
.bar { display: flex; align-items: center; box-sizing: border-box; border-bottom: 2px solid #858585; }
.main { height: 59px; padding-left: 9px; }
.params { height: 50px; padding-left: 9px; }
.grip { box-sizing: border-box; width: 10px; height: 43px; border: solid #8e8e8e; border-width: 0 2px; flex: none; }
.params .grip { height: 34px; }
.badge { box-sizing: border-box; height: 41px; padding: 0; flex: none; border: 2px solid #222; border-radius: 4px; background: linear-gradient(#e9e9e9, #dcdcdc); overflow: hidden; display: flex; align-items: center; justify-content: center; font-family: Roboto, "Liberation Sans", sans-serif; }
.link { width: 98px; margin-left: 20px; }
.quote { width: 98px; margin-left: 42px; }
.make { width: 121px; margin-left: 28px; border-color: #b0b0b0; background: #e8e8e8; }
.second { margin-left: 18px; }
.tools { display: flex; align-items: center; height: 100%; margin-left: -3px; }
.tool { position: relative; display: flex; align-items: center; justify-content: center; flex: none; }
.sep { width: 2px; height: 44px; background: #8e8e8e; flex: none; }
.icon { width: 32px; height: 32px; overflow: visible; display: block; flex: none; }
.more { position: absolute; left: calc(50% + 11.500px); top: calc(50% + 11.500px); width: 14px; height: 13.500px; background: #666; clip-path: polygon(0 0, 100% 0, 50% 100%); }
.gridtool { width: 50px; margin: 0 13px 0 1px; height: 46px; }
.work { flex: 1; display: flex; min-height: 0; }
.side { box-sizing: border-box; width: 110px; flex: none; border-right: 2px solid #a0a0a0; border-bottom: 2px solid #858585; }
.handle { box-sizing: border-box; width: 68px; height: 9px; margin: 8.500px 0 4.700px 21.500px; border: solid #8e8e8e; border-width: 2px 0; }
.row { display: grid; grid-template-columns: 55.300px 55.300px; margin-left: -1px; height: 51.690px; }
.cell { position: relative; display: flex; align-items: center; justify-content: center; }
.cell.on::before { content: ""; position: absolute; left: 4.500px; top: 3.500px; width: 48px; height: 45px; border-radius: 6px 6px 0 0; background: #cdcdcd; }
.cell .icon { position: relative; }
.cell .more { left: calc(50% + 9px); top: calc(50% + 9px); }
.rule { height: 23.400px; padding-top: 12px; box-sizing: border-box; }
.rule::before { content: ""; display: block; width: 96px; height: 2px; margin-left: 7.500px; background: #8e8e8e; }
.editor { flex: 1; display: flex; flex-direction: column; min-width: 0; }
.command { display: flex; align-items: center; box-sizing: border-box; height: 50px; padding: 0 3px 3px 0; }
.coords { width: 227px; padding-left: 14px; font-size: 23.500px; color: #1c1c1c; white-space: nowrap; }
.csep { width: 2px; height: 39px; background: #8e8e8e; }
.field { flex: 1; display: flex; height: 38px; margin-left: 27px; }
.input { flex: 1; background: #fff; border: 2px solid #69a3e6; border-right: 0; box-sizing: border-box; }
.drop { width: 32px; background: linear-gradient(#5eabf8, #0a6cff); border-radius: 0 7px 7px 0; }
.viewport { display: flex; height: 1606px; }
.canvas { position: relative; flex: 1; background: #808080; overflow: hidden; }
.board { display: block; }
.vscroll { width: 27px; background: #f9f9f9; box-sizing: border-box; border-left: 1px solid #d8d8d8; }
.hscroll { flex: 1; background: #f9f9f9; border-top: 1px solid #a8a8a8; }
.fusion { position: absolute; top: 9px; right: 3px; width: 51px; height: 280px; background: #2b2b2b; display: flex; flex-direction: column; align-items: center; padding-top: 37px; box-sizing: border-box; }
.fusion span { margin-top: 18px; writing-mode: vertical-rl; font-weight: 700; font-size: 22px; line-height: 26px; color: #f4f4f4; white-space: nowrap; }
.leads path { fill: none; stroke: #fff; stroke-opacity: .78; stroke-width: 10.500; stroke-linecap: round; }
.silk > * { fill: none; stroke: #fff; stroke-opacity: .84; }
.silk { stroke-width: 3.200; stroke-linejoin: round; }
.legend text { font-family: "Liberation Sans", sans-serif; fill: #f0f0f0; }
.legend .w0 { font-family: Roboto, "Liberation Sans", sans-serif; font-weight: 300; fill: #f4f4f4; }
.legend .w2 { stroke: #f0f0f0; stroke-width: .7; }
</style>
